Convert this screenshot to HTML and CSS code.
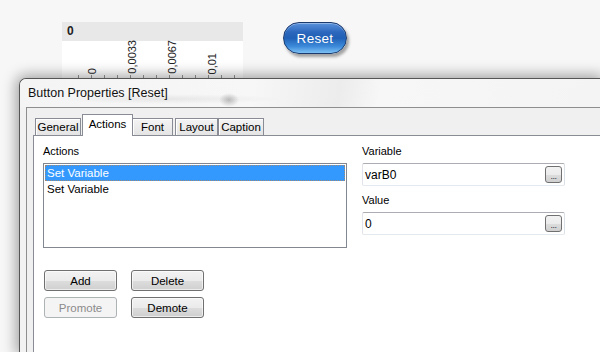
FILE: index.html
```html
<!DOCTYPE html>
<html lang="en">
<head>
  <meta charset="UTF-8" />
  <title>Button Properties</title>
  <link rel="stylesheet" href="styles.css">
</head>
<body>

<div class="top">
  <div class="chart">
    <div class="chart-head">0</div>
    <div class="chart-body">
      <div class="axis-labels">
        <span>0</span>
        <span>0,0033</span>
        <span>0,0067</span>
        <span>0,01</span>
      </div>
      <div class="ticks"></div>
    </div>
  </div>
  <button class="reset">Reset</button>
</div>

<div class="window">
  <div class="titlebar">Button Properties [Reset]</div>
  <div class="frame">
    <div class="client">
      <div class="tabs">
        <div class="tab tab-general">General</div>
        <div class="tab tab-actions active">Actions</div>
        <div class="tab tab-font">Font</div>
        <div class="tab tab-layout">Layout</div>
        <div class="tab tab-caption">Caption</div>
      </div>

      <div class="panel">
        <div class="col-left">
          <div class="label">Actions</div>
          <div class="listbox">
            <div class="item selected">Set Variable</div>
            <div class="item">Set Variable</div>
          </div>
          <div class="btn-grid">
            <button class="win-btn">Add</button>
            <button class="win-btn">Delete</button>
            <button class="win-btn" disabled>Promote</button>
            <button class="win-btn">Demote</button>
          </div>
        </div>

        <div class="col-right">
          <div class="label">Variable</div>
          <div class="field">
            <span>varB0</span>
            <span class="dots">...</span>
          </div>
          <div class="label label-gap">Value</div>
          <div class="field">
            <span>0</span>
            <span class="dots">...</span>
          </div>
        </div>
      </div>
    </div>
  </div>
</div>

</body>
</html>
```

FILE: styles.css
```css
html, body {
  margin: 0;
  height: 352px;
  overflow: hidden;
}

body {
  background: #f7f7f7;
  font-family: "Liberation Sans", Arial, sans-serif;
  font-size: 11px;
  color: #000;
  display: flex;
  flex-direction: column;
}

/* ---- page behind the dialog ---- */
.top {
  height: 78px;
  flex: none;
  box-sizing: border-box;
  padding: 22px 0 0 62px;
  display: flex;
  align-items: flex-start;
}

.chart {
  width: 181px;
}

.chart-head {
  height: 19px;
  background: #e8e8e8;
  font-weight: bold;
  font-size: 12px;
  line-height: 19px;
  padding-left: 5px;
  color: #222;
}

.chart-body {
  background: #fff;
  height: 37px;
  display: flex;
  flex-direction: column;
}

.axis-labels {
  height: 33px;
  display: flex;
  align-items: flex-end;
  gap: 26px;
  padding-left: 23px;
}

.axis-labels span {
  width: 14px;
  writing-mode: vertical-rl;
  transform: rotate(180deg);
  font-size: 11px;
  line-height: 14px;
  color: #222;
}

.ticks {
  height: 4px;
  margin-top: 1px;
  margin-left: 16px;
  background: repeating-linear-gradient(to right, #999 0 1px, transparent 1px 13px);
}

.reset {
  margin-left: 40px;
  width: 64px;
  height: 32px;
  border-radius: 16px;
  border: 1px solid #1b3a6e;
  background: linear-gradient(to bottom, #5a92dc 0%, #2c68bd 30%, #2060b6 50%, #3d8ada 78%, #7cc2f5 100%);
  box-shadow: inset 0 1px 0 rgba(255,255,255,0.35), 2px 3px 3px rgba(0,0,0,0.35);
  color: #fff;
  font-family: "Liberation Sans", Arial, sans-serif;
  font-size: 13.5px;
  padding: 0;
  letter-spacing: 0.3px;
}

/* ---- dialog window ---- */
.window {
  flex: 1;
  margin-left: 19px;
  border-top: 1px solid #555;
  border-left: 1px solid #555;
  border-radius: 7px 0 0 0;
  background: #f2f2f2;
  box-shadow: 0 0 14px 3px rgba(0,0,0,0.35);
  display: flex;
  flex-direction: column;
}

.titlebar {
  height: 28px;
  line-height: 29px;
  padding-left: 8px;
  font-size: 12.5px;
  color: #111;
  border-radius: 6px 0 0 0;
  background:
    radial-gradient(ellipse 10px 7px at 209px 21px, rgba(60,60,60,0.3), transparent),
    radial-gradient(ellipse 110px 5px at 150px 20px, rgba(120,120,120,0.12), transparent),
    linear-gradient(100deg, #f4f4f4 0%, #f7f7f7 40%, #ececec 55%, #f7f7f7 62%, #f4f4f4 100%);
}

.frame {
  flex: 1;
  padding-left: 6px;
  display: flex;
}

.client {
  flex: 1;
  border-top: 1px solid #8e8e8e;
  border-left: 1px solid #8e8e8e;
  background: #f0f0f0;
  padding: 7px 0 0 6px;
  display: flex;
  flex-direction: column;
}

.tabs {
  display: flex;
  align-items: flex-end;
  height: 20px;
  padding-left: 2px;
  font-size: 11.5px;
}

.tab {
  box-sizing: border-box;
  height: 17px;
  line-height: 16px;
  text-align: center;
  border: 1px solid #898c95;
  border-bottom: none;
  background: linear-gradient(to bottom, #f4f4f4, #e4e4e4);
  box-shadow: inset 1px 1px 0 #fff;
}

.tab.active {
  height: 22px;
  margin-bottom: -1px;
  line-height: 18px;
  background: #fff;
  box-shadow: none;
  position: relative;
  z-index: 1;
}

.tab-general { width: 46px; }
.tab-actions { width: 51px; margin-left: 1px; }
.tab-font { width: 41px; margin-left: -1px; }
.tab-layout { width: 43px; margin-left: 2px; }
.tab-caption { width: 46px; }

.panel {
  flex: 1;
  background: #fff;
  border-top: 1px solid #898c95;
  border-left: 1px solid #898c95;
  padding: 9px 0 0 9px;
  display: flex;
  gap: 15px;
}

.label {
  height: 13px;
  line-height: 13px;
  margin-bottom: 5px;
  color: #000;
}

.label-gap {
  margin-top: 8px;
}

.listbox {
  box-sizing: border-box;
  width: 304px;
  height: 85px;
  border: 1px solid #828790;
  padding: 1px;
}

.item {
  height: 16px;
  line-height: 16px;
  padding-left: 2px;
  box-sizing: border-box;
  font-size: 11.5px;
}

.item.selected {
  background: #3399ff;
  color: #fff;
  outline: 1px dotted rgba(200,130,60,0.7);
  outline-offset: -1px;
}

.btn-grid {
  display: grid;
  grid-template-columns: 73px 73px;
  column-gap: 14px;
  row-gap: 6px;
  margin: 22px 0 0 1px;
}

.win-btn {
  height: 21px;
  padding: 0;
  font-family: "Liberation Sans", Arial, sans-serif;
  font-size: 11.5px;
  font-weight: normal;
  color: #000;
  border: 1px solid #707070;
  border-radius: 3px;
  background: linear-gradient(to bottom, #f2f2f2 0%, #ebebeb 50%, #dddddd 51%, #cfcfcf 100%);
  box-shadow: inset 0 0 0 1px rgba(255,255,255,0.6);
}

.win-btn:disabled {
  color: #8b8b8b;
  border-color: #adb2b5;
  background: #f4f4f4;
  box-shadow: none;
}

.col-right {
  width: 203px;
}

.field {
  box-sizing: border-box;
  height: 23px;
  border: 1px solid;
  border-color: #abadb3 #dbdfe6 #e3e9ef #e2e3ea;
  border-radius: 2px;
  display: flex;
  align-items: center;
  justify-content: space-between;
  padding: 0 2px 0 2px;
  font-size: 12px;
}

.dots {
  box-sizing: border-box;
  width: 17px;
  height: 17px;
  border: 1px solid #707070;
  border-radius: 3px;
  background: linear-gradient(to bottom, #f2f2f2 0%, #ebebeb 50%, #dddddd 51%, #cfcfcf 100%);
  font-size: 9px;
  line-height: 19px;
  text-align: center;
  color: #334;
  letter-spacing: -0.5px;
}
```
